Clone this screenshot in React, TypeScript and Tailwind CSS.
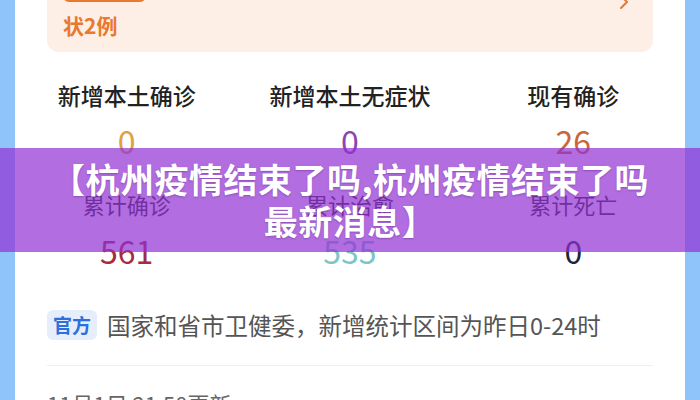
import { FC } from "react";

const cjk = { fontFamily: '"Noto Sans CJK SC", "Noto Sans", sans-serif' };

interface Stat {
  label: string;
  value: string;
  color: string;
}

const topStats: Stat[] = [
  { label: "新增本土确诊", value: "0", color: "text-[#e0a03c]" },
  { label: "新增本土无症状", value: "0", color: "text-[#8a45b2]" },
  { label: "现有确诊", value: "26", color: "text-[#c9673a]" },
];

const bottomStats: Stat[] = [
  { label: "累计确诊", value: "561", color: "text-[#a52b3e]" },
  { label: "累计治愈", value: "535", color: "text-[#7cc6c8]" },
  { label: "累计死亡", value: "0", color: "text-[#1c2636]" },
];

const StatCell: FC<{ stat: Stat; big?: boolean }> = ({ stat, big }) => (
  <div className="flex flex-col items-center">
    <div
      className={
        big
          ? "text-[23px] leading-[28px] font-medium text-[#222]"
          : "mt-[33px] text-[22px] leading-[26px] text-[#2a2a2a]"
      }
    >
      {stat.label}
    </div>
    <div
      className={`${big ? "mt-[13px]" : "mt-[15px]"} text-[32px] leading-[36px] ${stat.color}`}
    >
      {stat.value}
    </div>
  </div>
);

const App: FC = () => {
  return (
    <div
      className="relative w-[700px] h-[400px] overflow-hidden bg-[#8fc4fb] px-[15px]"
      style={cjk}
    >
      <div className="h-full flex flex-col bg-white">
        {/* Notice card (top is scrolled off) */}
        <div className="px-[32px]">
          <div className="relative -mt-[44px] rounded-xl bg-[#fdeee6] pl-[16px] pt-[12px] pb-[13px]">
            <div className="h-[34px] w-[83px] rounded-md border-2 border-[#e8792f]" />
            <div className="mt-[9px] text-[21px] leading-[28px] font-bold text-[#e8792f]">
              状2例
            </div>
            <svg
              className="absolute right-[24px] top-[38px] w-[10px] h-[16px] text-[#e8792f]"
              viewBox="0 0 10 16"
              fill="none"
              stroke="currentColor"
              strokeWidth="2"
              strokeLinecap="round"
              strokeLinejoin="round"
            >
              <path d="M2 2l6 6-6 6" />
            </svg>
          </div>
        </div>

        {/* Stats */}
        <div className="mt-[29px] grid grid-cols-3">
          {topStats.map((s) => (
            <StatCell key={s.label} stat={s} big />
          ))}
          {bottomStats.map((s) => (
            <StatCell key={s.label} stat={s} />
          ))}
        </div>

        {/* Source */}
        <div className="px-[32px]">
          <div className="mt-[42px] flex items-center gap-[10px]">
            <span className="h-[30px] w-[50px] flex items-center justify-center rounded-md bg-[#e5eefa] text-[19px] font-bold text-[#2d6fdc]">
              官方
            </span>
            <span className="text-[23.5px] leading-[30px] text-[#555]">
              国家和省市卫健委，新增统计区间为昨日0-24时
            </span>
          </div>
          <div className="mt-[25px] h-px bg-[#eeeeee]" />
          <div className="mt-[22px] text-[22px] leading-[30px] text-[#666]">
            11月1日 21:50更新
          </div>
        </div>
      </div>

      {/* Title overlay band */}
      <div className="absolute left-0 right-0 top-[148px] h-[104px] flex items-center justify-center bg-[rgba(145,48,211,0.7)]">
        <div className="text-center text-[34px] leading-[42px] font-bold text-white tracking-[0.5px] [text-shadow:0_1px_2px_rgba(60,0,90,0.3)]">
          【杭州疫情结束了吗,杭州疫情结束了吗
          <br />
          最新消息】
        </div>
      </div>
    </div>
  );
};

export default App;
